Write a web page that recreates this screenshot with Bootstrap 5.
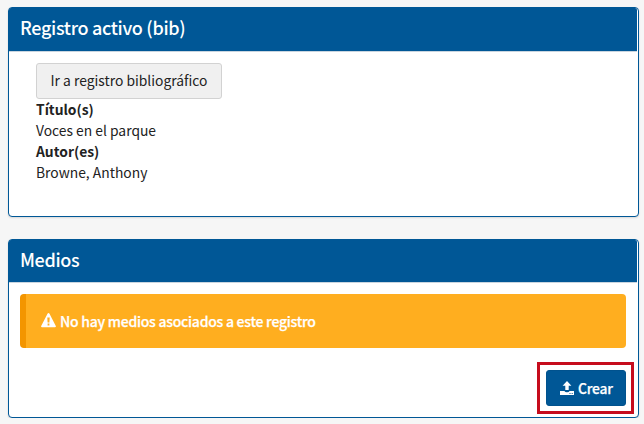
<!DOCTYPE html>
<html lang="es">
<head>
<meta charset="utf-8">
<meta name="viewport" content="width=device-width, initial-scale=1">
<title>Registro activo</title>
<link rel="stylesheet" href="https://cdn.jsdelivr.net/npm/bootstrap@5.3.0/dist/css/bootstrap.min.css">
<style>
body{background:#f6f6f6;color:#222;font-family:"Noto Sans CJK SC","Noto Sans",sans-serif;font-size:13.85px;line-height:21px;padding:7px 5px 0 8px;overflow:hidden}
.panel{border:1px solid #005796;border-radius:4px;box-shadow:0 1px 2px rgba(0,0,0,.12);padding-right:1px}
.panel-record{height:210px;margin-bottom:22px}
.panel-media{height:179px}
.panel-title{background:#005796;color:#fff;border-bottom:1px solid #c9d5df;border-radius:2px 2px 0 0;font-size:18px;font-weight:500;letter-spacing:-.32px;line-height:22px;height:44px;margin:0;padding:8px 11px 0}
.panel-media .panel-title{height:43px;padding-top:8px}
.btn{font-size:13.85px;line-height:20px;height:36px;padding:6px 14px;border-radius:3px}
.btn-record{--bs-btn-bg:#f0f0f0;--bs-btn-color:#222;--bs-btn-border-color:#d2d2d2;width:186px;padding:5px 0 7px;white-space:nowrap}
.btn-create{--bs-btn-bg:#005796;--bs-btn-color:#fff;--bs-btn-border-color:#00528e;font-weight:500;letter-spacing:-.2px;width:80px;padding:6px 0 6px 13px;-webkit-text-stroke:.25px #fff}
.btn-create svg{margin-right:4px}
.record-body{padding:11px 27px}
.notice{background:#ffae1f;border:0;border-left:6px solid #f39500;border-radius:4px;color:#fff;font-size:14px;font-weight:500;letter-spacing:-.25px;height:54px;padding:0 15px;-webkit-text-stroke:.25px #fff}
.notice svg{margin-bottom:1px;margin-right:4px}
.highlight{border:3px solid #c60c1d;padding:5px 5px 5px 6px}
.media-body{padding:11px 11px 0}
.actions{margin:14px -8px 0 0}
</style>
<script src="https://cdn.jsdelivr.net/npm/bootstrap@5.3.0/dist/js/bootstrap.bundle.min.js"></script>
</head>
<body>
<section class="panel panel-record bg-white">
<h2 class="panel-title">Registro activo (bib)</h2>
<div class="record-body">
<button type="button" class="btn btn-record d-block">Ir a registro bibliográfico</button>
<div class="fw-bold">Título(s)</div>
<div>Voces en el parque</div>
<div class="fw-bold">Autor(es)</div>
<div>Browne, Anthony</div>
</div>
</section>
<section class="panel panel-media bg-white">
<h2 class="panel-title">Medios</h2>
<div class="media-body">
<div class="alert notice d-flex align-items-center mb-0" role="alert">
<svg width="15" height="15" viewBox="0 0 15 15" aria-hidden="true"><path fill="#fff" fill-rule="evenodd" d="M7.5 0Q8.1 0 8.5.7L14.8 12.9Q15.2 14.2 14 14.3H1Q-.2 14.2.2 12.9L6.5.7Q6.9 0 7.5 0ZM6.3 4.6 6.6 9.4H8.4L8.7 4.6ZM6.6 10.5V12.4H8.4V10.5Z"/></svg>
<span>No hay medios asociados a este registro</span>
</div>
<div class="actions d-flex justify-content-end">
<div class="highlight">
<button type="button" class="btn btn-create d-flex align-items-center"><svg width="14" height="15" viewBox="0 0 14 15" aria-hidden="true"><path fill="#fff" fill-rule="evenodd" d="M7 0 11.4 4.7H8.7V9H5.3V4.7H2.6ZM0 10H4.4Q5 11.3 7 11.3T9.6 10H14V14H0ZM9.5 12V13H10.5V12ZM11.7 12V13H12.7V12Z"/></svg><span>Crear</span></button>
</div>
</div>
</div>
</section>
</body>
</html>
